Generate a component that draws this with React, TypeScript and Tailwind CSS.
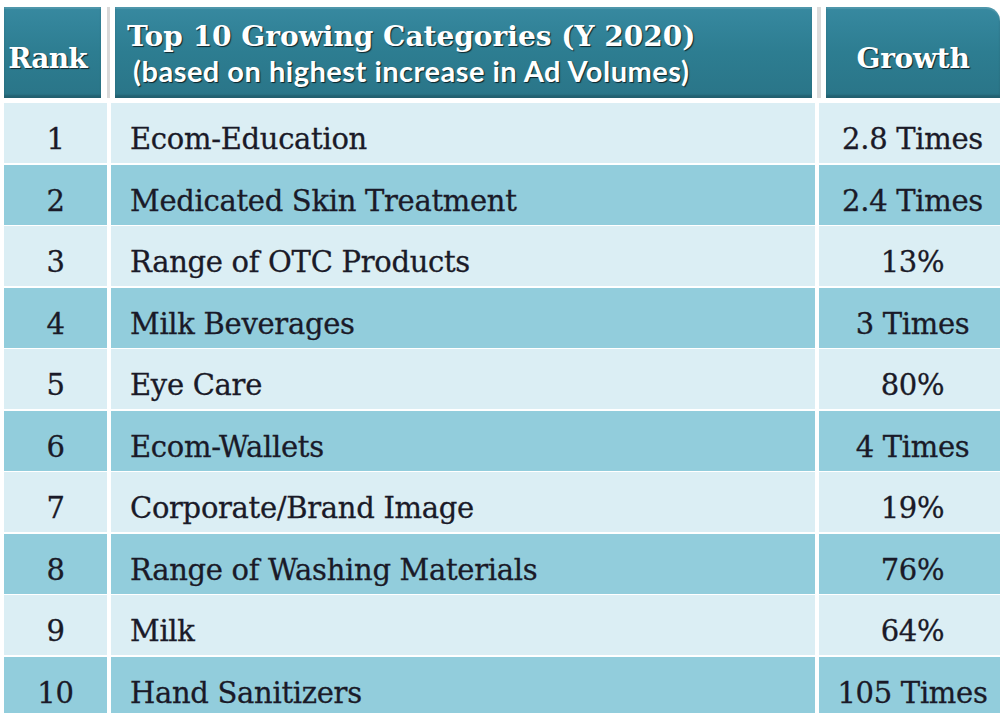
import React from "react";

const rows = [
  { rank: 1, name: "Ecom-Education", growth: "2.8 Times" },
  { rank: 2, name: "Medicated Skin Treatment", growth: "2.4 Times" },
  { rank: 3, name: "Range of OTC Products", growth: "13%" },
  { rank: 4, name: "Milk Beverages", growth: "3 Times" },
  { rank: 5, name: "Eye Care", growth: "80%" },
  { rank: 6, name: "Ecom-Wallets", growth: "4 Times" },
  { rank: 7, name: "Corporate/Brand Image", growth: "19%" },
  { rank: 8, name: "Range of Washing Materials", growth: "76%" },
  { rank: 9, name: "Milk", growth: "64%" },
  { rank: 10, name: "Hand Sanitizers", growth: "105 Times" },
];

const headCell =
  "bg-gradient-to-b from-[#3789a0] via-[#2d7d91] to-[#2a7588] text-white [box-shadow:inset_0_-3px_2px_rgba(0,0,0,0.18),inset_0_2px_1px_rgba(255,255,255,0.12)] [text-shadow:1px_1px_1px_rgba(0,0,0,0.7)]";

export default function App() {
  return (
    <div className="w-[1007px] h-[719px] bg-white overflow-hidden">
      <div className="pl-[4px] pt-[7px] w-[1000px]">
        {/* header */}
        <div className="flex h-[91px]">
          <div
            className={`${headCell} w-[97px] flex items-center justify-center pt-[12px] pr-[10px] text-[28px] font-bold font-['DejaVu_Serif',serif] tracking-[-0.8px]`}
          >
            Rank
          </div>
          <div className="w-[14px] flex justify-center">
            <div className="w-[3px] h-full bg-[#d9d9d9]" />
          </div>
          <div
            className={`${headCell} w-[697px] flex flex-col justify-center pl-[12px] pt-[2px]`}
          >
            <div className="text-[28px] leading-[34px] font-bold font-['DejaVu_Serif',serif]">
              Top 10 Growing Categories (Y 2020)
            </div>
            <div className="text-[29px] leading-[33px] font-bold font-['Lato',sans-serif] pl-[6px] tracking-[0.5px]">
              (based on highest increase in Ad Volumes)
            </div>
          </div>
          <div className="w-[14px] flex justify-center">
            <div className="w-[4px] h-full bg-[#dcdcdc]" />
          </div>
          <div
            className={`${headCell} w-[174px] rounded-tr-[14px] flex items-center justify-center pt-[12px] text-[28px] font-bold font-['DejaVu_Serif',serif] tracking-[-0.3px]`}
          >
            Growth
          </div>
        </div>

        {/* body */}
        <div className="mt-[5px] h-[610px] overflow-hidden flex flex-col gap-y-[1.5px]">
          {rows.map((r, i) => {
            const bg = i % 2 === 0 ? "bg-[#dbeef4]" : "bg-[#92cddc]";
            return (
              <div
                key={r.rank}
                className="grid grid-cols-[103px_704px_181px] gap-x-[4px] shrink-0 h-[60px] text-[29px] text-[#1a1a28] font-['DejaVu_Serif',serif] tracking-[-0.3px] [-webkit-text-stroke:0.3px_#1a1a28]"
              >
                <div className={`${bg} flex items-center justify-center pt-[14px]`}>
                  {r.rank}
                </div>
                <div className={`${bg} flex items-center pl-[19px] pt-[14px]`}>
                  {r.name}
                </div>
                <div className={`${bg} flex items-center justify-center pt-[14px] pl-[6px]`}>
                  {r.growth}
                </div>
              </div>
            );
          })}
        </div>
      </div>
    </div>
  );
}
